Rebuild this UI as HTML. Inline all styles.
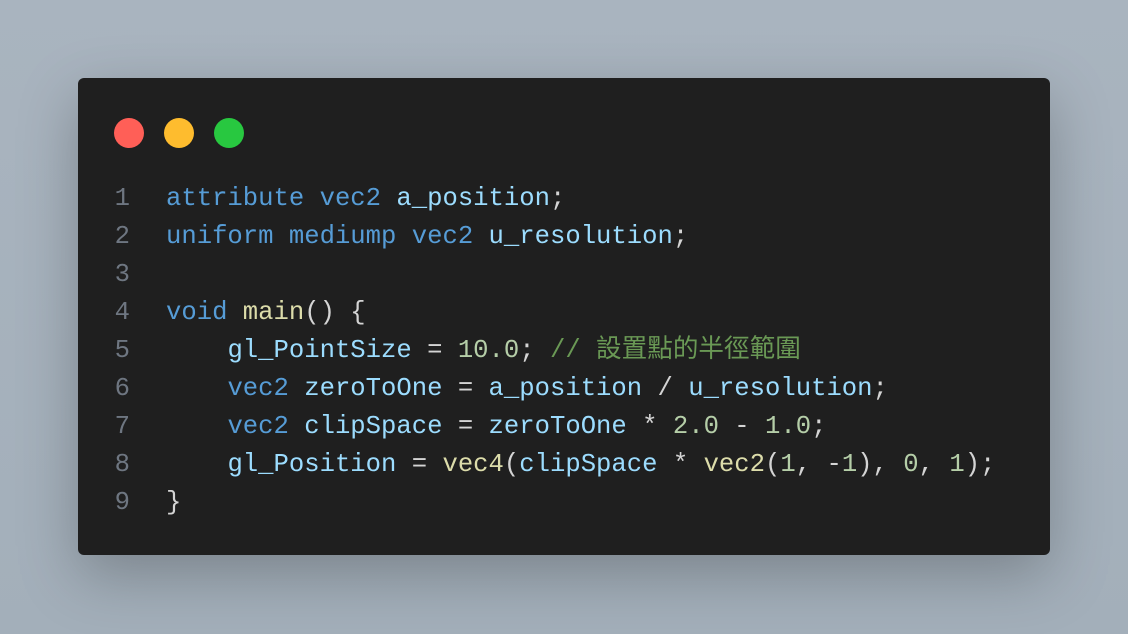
<!DOCTYPE html>
<html><head><meta charset="utf-8"><style>
html,body{margin:0;padding:0;}
body{width:1128px;height:634px;background:linear-gradient(180deg,#a9b4bf,#a3afba);position:relative;overflow:hidden;font-family:"Liberation Mono","Noto Sans CJK TC",monospace;}
.card{position:absolute;left:78px;top:78px;width:972px;height:477px;background:#1f1f1f;border-radius:6px;box-shadow:0 20px 60px rgba(0,0,0,0.25);}
.dot{position:absolute;top:40px;width:30px;height:30px;border-radius:50%;}
.code{position:absolute;left:0;top:102px;font-size:25.6px;line-height:38px;color:#d4d4d4;white-space:pre;}
.ln{position:absolute;left:20px;width:32px;text-align:right;color:#6e7681;}
.tx{position:absolute;left:88px;}
.k{color:#569cd6}.v{color:#9cdcfe}.f{color:#dcdcaa}.n{color:#b5cea8}.c{color:#6a9955}
</style></head><body>
<div class="card">
<div class="dot" style="left:36px;background:#ff5f57"></div>
<div class="dot" style="left:86px;background:#febc2e"></div>
<div class="dot" style="left:136px;background:#28c840"></div>
<div class="code">
<div class="ln" style="top:0">1
2
3
4
5
6
7
8
9</div>
<div class="tx" style="top:0"><span class="k">attribute</span> <span class="k">vec2</span> <span class="v">a_position</span>;
<span class="k">uniform</span> <span class="k">mediump</span> <span class="k">vec2</span> <span class="v">u_resolution</span>;

<span class="k">void</span> <span class="f">main</span>() {
    <span class="v">gl_PointSize</span> = <span class="n">10.0</span>; <span class="c">// 設置點的半徑範圍</span>
    <span class="k">vec2</span> <span class="v">zeroToOne</span> = <span class="v">a_position</span> / <span class="v">u_resolution</span>;
    <span class="k">vec2</span> <span class="v">clipSpace</span> = <span class="v">zeroToOne</span> * <span class="n">2.0</span> - <span class="n">1.0</span>;
    <span class="v">gl_Position</span> = <span class="f">vec4</span>(<span class="v">clipSpace</span> * <span class="f">vec2</span>(<span class="n">1</span>, -<span class="n">1</span>), <span class="n">0</span>, <span class="n">1</span>);
}</div>
</div>
</div>
</body></html>
